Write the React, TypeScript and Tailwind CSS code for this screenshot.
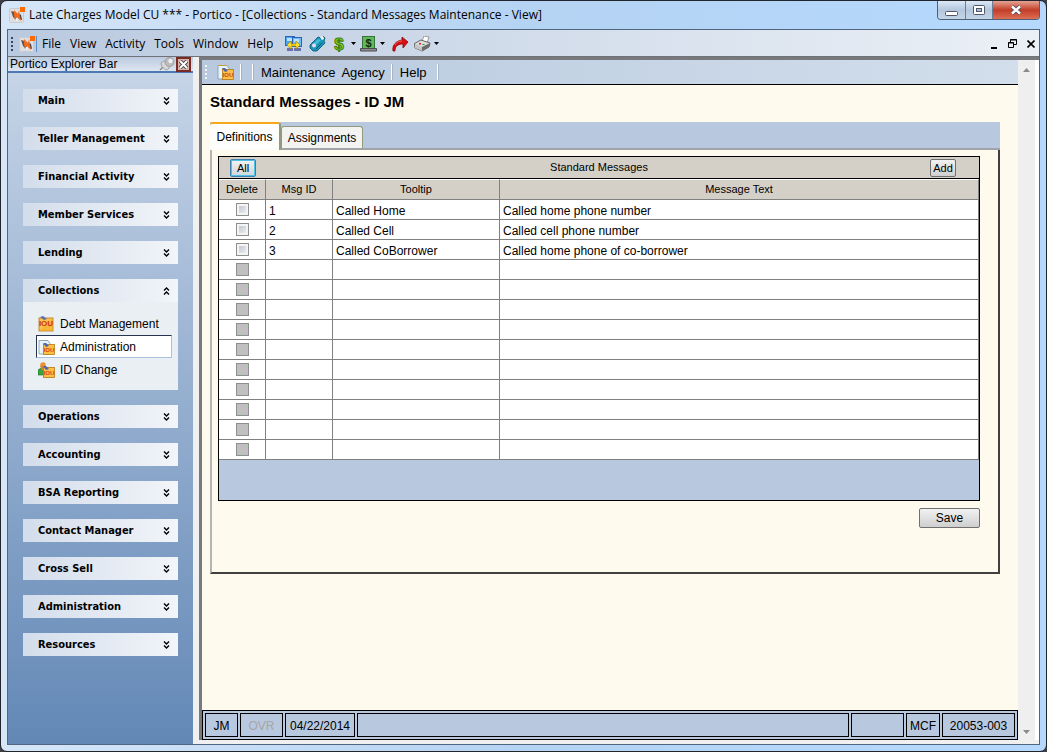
import React, { useState } from "react";
import clsx from "clsx";

type Row = { id: string; tooltip: string; text: string };

const sections = [
  "Main",
  "Teller Management",
  "Financial Activity",
  "Member Services",
  "Lending",
  "Collections",
  "Operations",
  "Accounting",
  "BSA Reporting",
  "Contact Manager",
  "Cross Sell",
  "Administration",
  "Resources",
];

const menus = ["File", "View", "Activity", "Tools", "Window", "Help"];

const rows: Row[] = [
  { id: "1", tooltip: "Called Home", text: "Called home phone number" },
  { id: "2", tooltip: "Called Cell", text: "Called cell phone number" },
  { id: "3", tooltip: "Called CoBorrower", text: "Called home phone of co-borrower" },
];

const emptyRows = Array.from({ length: 10 }, (_, i) => i);

const Logo: React.FC = () => (
  <svg width="16" height="16" viewBox="0 0 16 16" className="shrink-0">
    <rect x="0.5" y="1.5" width="14" height="14" rx="1" fill="#dedfe2" stroke="#c9cbd0" />
    <path d="M2 4l4 1 2 5-2 2-2-2z" fill="#5a5b60" />
    <path d="M9 6l3 2 1 5-3-1-2-3z" fill="#3f4146" />
    <path d="M5 3l4 4 1-4 1 6 1 5-4-4-2 3-1-5z" fill="#f26a1b" />
    <path d="M7 11l2 1-2 2z" fill="#f5f5f5" />
    <rect x="11" y="0" width="5" height="5" fill="#ff6a00" />
  </svg>
);

const NetworkIcon: React.FC = () => (
  <svg width="17" height="16" viewBox="0 0 17 16">
    <rect x="0.5" y="0.5" width="9" height="9" fill="#4aa4ee" stroke="#2d62b8" />
    <rect x="7.5" y="1.5" width="9" height="9" fill="#6cbcf8" stroke="#2d62b8" />
    <path d="M2 2h5v3H2zM9 3h5v3H9z" fill="#b5e2fc" />
    <path d="M2 12h6v3H2zM9 12h7v3H9z" fill="#6a70ae" />
    <path d="M2 9l4-4v3h5V5l4 4-4 4v-3H6v3z" fill="#ffe02a" stroke="#a98408" strokeWidth="0.7" />
  </svg>
);

const PhoneIcon: React.FC = () => (
  <svg width="17" height="16" viewBox="0 0 17 16">
    <path d="M1 9L9 1l3 1 2-2 2 2-1 3 1 2-8 8-4 0-3-3z" fill="#1697b8" stroke="#0b5270" strokeWidth="0.8" />
    <path d="M3 9l6-6 3 1-7 7z" fill="#45bcd8" />
    <path d="M11 1l3-1 1 3-2 1z" fill="#f2f6f8" />
    <circle cx="5" cy="9.5" r="2" fill="#f3d3f2" />
    <path d="M9 11l4-4M7 13l2-2" stroke="#0b5270" />
  </svg>
);

const DollarIcon: React.FC = () => (
  <svg width="12" height="16" viewBox="0 0 12 16">
    <text x="6" y="13.5" textAnchor="middle" fontSize="17" fontWeight="bold" fill="#86dc28" stroke="#3e7d0c" strokeWidth="1">
      $
    </text>
  </svg>
);

const CashIcon: React.FC = () => (
  <svg width="17" height="16" viewBox="0 0 17 16">
    <rect x="2.5" y="0.5" width="12" height="12" fill="#62b85c" stroke="#35733a" />
    <path d="M0.5 12.5h16v2.5h-16z" fill="#8d8d92" stroke="#4c4c50" />
    <text x="8.5" y="10.5" textAnchor="middle" fontSize="11" fontWeight="bold" fill="#0c2c10">
      $
    </text>
  </svg>
);

const ForwardIcon: React.FC = () => (
  <svg width="17" height="16" viewBox="0 0 17 16">
    <path d="M1 15C0 9 4 5 10 4V1l6 5-5 6V8C6 8 3 10 3 15z" fill="#d90e12" stroke="#8d0508" strokeWidth="0.8" />
    <path d="M3 9c1.500-3 4-4 7-4" fill="none" stroke="#f4605c" />
  </svg>
);

const PrinterIcon: React.FC = () => (
  <svg width="17" height="16" viewBox="0 0 17 16">
    <path d="M8 5l2-5 5 1-2 6z" fill="#fff" stroke="#888" strokeWidth="0.8" />
    <path d="M0.5 7.500L7 4l9 3-1 4-7 4-7-3z" fill="#dcdcdc" stroke="#444" strokeWidth="0.8" />
    <path d="M1 8l7 3v4l-7-3z" fill="#c4c4c4" />
    <path d="M8 11l8-4-1 4-7 4z" fill="#6b6b6b" />
    <path d="M5 7h2v1.500H5z" fill="#e02020" />
    <path d="M8.500 8h2v1h-2z" fill="#2c9a3c" />
  </svg>
);

const Caret: React.FC = () => (
  <svg width="5" height="3" viewBox="0 0 5 3" className="shrink-0">
    <path d="M0 0h5L2.500 3z" fill="#000" />
  </svg>
);

// small "IOU" note used by every Collections entry
const IouIcon: React.FC<{ kind?: "debt" | "admin" | "change" }> = ({ kind = "admin" }) => (
  <svg width="17" height="16" viewBox="0 0 17 16" className="shrink-0">
    {kind === "debt" && (
      <>
        <rect x="1" y="2" width="14" height="13" fill="#fbc44a" stroke="#b87816" strokeWidth="0.8" />
        <path d="M1 15L15 2v13z" fill="#f2a92c" opacity="0.5" />
        <path d="M2 1l3-1 4 3-3 1z" fill="#5a6fb4" />
        <text x="8" y="10" textAnchor="middle" fontSize="8" fontWeight="bold" fill="#d2321a">
          IOU
        </text>
      </>
    )}
    {kind === "admin" && (
      <>
        <path d="M1 1.500h9l2 3V15H1z" fill="#e6f3fa" stroke="#7f98a8" strokeWidth="0.8" />
        <path d="M1 1.500h9" stroke="#b89a40" strokeWidth="1.2" strokeDasharray="1 1" />
      </>
    )}
    {kind === "change" && (
      <>
        <circle cx="5" cy="3" r="2.8" fill="#e89232" />
        <path d="M0 13V8l3-2h5v7z" fill="#3da23e" stroke="#1d6a22" strokeWidth="0.6" />
        <path d="M2 4h6v4H4z" fill="#d98232" />
      </>
    )}
    {kind !== "debt" && (
      <>
        <rect x="5.5" y="5.5" width="11" height="10" fill="#fbc044" stroke="#b87816" strokeWidth="0.8" />
        <path d="M5 4l3 0 3 3-3 1z" fill="#4f66b0" />
        <text x="11" y="13" textAnchor="middle" fontSize="6" fontWeight="bold" fill="#d2441a">
          IOU
        </text>
      </>
    )}
  </svg>
);

const PinIcon: React.FC = () => (
  <svg width="16" height="14" viewBox="0 0 16 14">
    <path d="M1 13l5-5" stroke="#8a8a8a" strokeWidth="1.5" />
    <path d="M2 6c2-3 5-2 8 2 1 2 0 4-2 5-4-1-6-4-6-7z" fill="#d6d6d6" stroke="#8a8a8a" strokeWidth="0.7" />
    <circle cx="10.5" cy="5" r="4.5" fill="#bdbdbd" stroke="#909090" strokeWidth="0.7" />
    <circle cx="11.5" cy="4" r="2.2" fill="#f0f0f0" />
  </svg>
);

const Chevrons: React.FC<{ up?: boolean }> = ({ up }) => (
  <svg width="7" height="8" viewBox="0 0 7 8" className={clsx(up && "rotate-180")}>
    <path d="M1 0.500l2.500 2.500L6 0.500M1 4.500L3.500 7 6 4.500" fill="none" stroke="#000" strokeWidth="1.4" />
  </svg>
);

const Grip: React.FC<{ light?: boolean }> = ({ light }) => (
  <span
    className={clsx(
      "h-[14px] w-[2px] shrink-0",
      light
        ? "bg-[repeating-linear-gradient(#f4f4f4_0_2px,transparent_2px_4px)]"
        : "bg-[repeating-linear-gradient(#31466f_0_2px,transparent_2px_4px)]"
    )}
  />
);

const TitleBar: React.FC = () => (
  <header className="flex h-7 items-start justify-between pl-2 pr-[6px]">
    <div className="flex items-center gap-1 pt-[5px]">
      <Logo />
      <h1 className="whitespace-nowrap font-['Open_Sans',sans-serif] text-[12px] leading-[18px]">
        Late Charges Model CU *** - Portico - [Collections - Standard Messages Maintenance - View]
      </h1>
    </div>
    <div className="flex h-[19px] overflow-hidden rounded-b-[4px] border border-t-0 border-[#4d6078]">
      <button
        aria-label="Minimize"
        className="flex w-7 items-end justify-center border-r border-[#6a7f99] bg-linear-to-b from-[#dce8f5] via-[#b4c7dd] via-50% to-[#c3d5e8] pb-[3px]"
      >
        <svg width="13" height="6" viewBox="0 0 13 6">
          <rect x="0.5" y="1.5" width="12" height="4" rx="1" fill="#fff" stroke="#535666" />
        </svg>
      </button>
      <button
        aria-label="Restore"
        className="flex w-[27px] items-center justify-center border-r border-[#6a7f99] bg-linear-to-b from-[#dce8f5] via-[#b4c7dd] via-50% to-[#c3d5e8]"
      >
        <svg width="12" height="10" viewBox="0 0 12 10">
          <rect x="0.5" y="0.5" width="11" height="9" rx="1" fill="#fff" stroke="#535666" />
          <rect x="3.5" y="3.5" width="5" height="3" fill="#a9c0da" stroke="#535666" />
        </svg>
      </button>
      <button
        aria-label="Close"
        className="flex w-[46px] items-center justify-center bg-linear-to-b from-[#e3a294] via-[#c23c26] via-50% to-[#dc6f54]"
      >
        <svg width="12" height="10" viewBox="0 0 12 10">
          <path d="M2 1.500l8 7M10 1.500l-8 7" stroke="#535666" strokeWidth="4" />
          <path d="M2 1.500l8 7M10 1.500l-8 7" stroke="#fff" strokeWidth="2.4" />
        </svg>
      </button>
    </div>
  </header>
);

const MenuBar: React.FC = () => (
  <nav className="flex h-[26px] shrink-0 items-center justify-between bg-linear-to-r from-[#b9c9df] to-[#ebf0f6] pl-[3px] pr-1 pt-px">
    <div className="flex items-center">
      <Grip />
      <span className="ml-[6px] flex border-r border-[#5b8fd0] pr-px">
        <Logo />
      </span>
      <div className="ml-[5px] flex gap-[9px] font-['Open_Sans',sans-serif] text-[12px]">
        {menus.map((menu) => (
          <button key={menu}>{menu}</button>
        ))}
      </div>
      <div className="ml-3 flex items-center gap-[7px]">
        <button aria-label="Network"><NetworkIcon /></button>
        <button aria-label="Phone"><PhoneIcon /></button>
        <button aria-label="Money" className="flex items-center gap-[6px]">
          <DollarIcon />
          <Caret />
        </button>
        <button aria-label="Cash" className="-ml-[3px] flex items-center gap-[3px]">
          <CashIcon />
          <Caret />
        </button>
        <button aria-label="Forward"><ForwardIcon /></button>
        <button aria-label="Print" className="-ml-[2px] flex items-center gap-[3px]">
          <PrinterIcon />
          <Caret />
        </button>
      </div>
    </div>
    <div className="flex items-center gap-[10px]">
      <button aria-label="Minimize document">
        <svg width="7" height="10" viewBox="0 0 7 10"><path d="M0 8h6v2H0z" /></svg>
      </button>
      <button aria-label="Restore document">
        <svg width="9" height="9" viewBox="0 0 9 9">
          <path d="M2.500 3V0.500h6v5H6M2 1h7" fill="none" stroke="#000" />
          <path d="M0.500 3.500h5v5h-5zM0 4h6" fill="none" stroke="#000" />
        </svg>
      </button>
      <button aria-label="Close document">
        <svg width="8" height="8" viewBox="0 0 8 8"><path d="M0.500 0.500l7 7M7.500 0.500l-7 7" stroke="#000" strokeWidth="1.6" /></svg>
      </button>
    </div>
  </nav>
);

const Sidebar: React.FC = () => {
  const [open, setOpen] = useState("Collections");

  return (
    <aside className="flex w-[185px] shrink-0 flex-col bg-linear-to-b from-[#c8d6e8] to-[#6388b6]">
      <div className="flex h-4 items-center justify-between border-b-2 border-[#4d79b4] bg-linear-to-b from-[#bccbe0] to-[#dde5f0] pl-[2px] pr-[2px]">
        <h2 className="text-[12px] leading-[14px]">Portico Explorer Bar</h2>
        <div className="flex items-center gap-px">
          <button aria-label="Pin"><PinIcon /></button>
          <button
            aria-label="Close explorer bar"
            className="flex h-[15px] w-[15px] items-center justify-center border-2 border-[#7a2a24] bg-[#d8b4ae]"
          >
            <svg width="9" height="9" viewBox="0 0 9 9" className="shrink-0">
              <path d="M1 1l7 7M8 1L1 8" stroke="#444" strokeWidth="3.8" />
              <path d="M1 1l7 7M8 1L1 8" stroke="#fff" strokeWidth="2" />
            </svg>
          </button>
        </div>
      </div>
      <div className="flex flex-col gap-[15px] px-[15px] pt-4">
        {sections.map((name) => (
          <section key={name}>
            <button
              onClick={() => setOpen(open === name ? "" : name)}
              className="flex h-[23px] w-full items-center justify-between bg-linear-to-r from-[#d3ddeb] to-[#f2f5f9] pl-[15px] pr-2 font-['DejaVu_Sans_Condensed','DejaVu_Sans',sans-serif] text-[11px] font-bold"
            >
              <span className="pt-[2px]">{name}</span>
              <Chevrons up={open === name} />
            </button>
            {open === name && name === "Collections" && (
              <div className="bg-[#eaeff4] pb-[9px] pl-[13px] pr-[6px] pt-[10px] text-[12px]">
                <a href="#debt" className="flex h-[23px] items-center gap-[5px] px-[2px]">
                  <IouIcon kind="debt" />
                  Debt Management
                </a>
                <a
                  href="#administration"
                  className="flex h-[23px] items-center gap-[5px] border border-[#a9c0de] border-l-[#26344e] border-t-[#26344e] bg-white px-px"
                >
                  <IouIcon kind="admin" />
                  Administration
                </a>
                <a href="#id-change" className="flex h-[23px] items-center gap-[5px] px-[2px]">
                  <IouIcon kind="change" />
                  ID Change
                </a>
              </div>
            )}
          </section>
        ))}
      </div>
    </aside>
  );
};

const MessagesTable: React.FC = () => {
  const [checked, setChecked] = useState<string[]>([]);

  const toggle = (id: string) =>
    setChecked(checked.includes(id) ? checked.filter((c) => c !== id) : [...checked, id]);

  const box = "block mx-auto h-[13px] w-[13px] appearance-none border border-[#8e8f8f]";

  return (
    <div className="border border-black bg-[#b8c9df] pb-10">
      <div className="grid h-[22px] grid-cols-[1fr_auto_1fr] items-center border-b border-black bg-[#d4d0c8] px-[11px] text-[11px]">
        <button
          onClick={() => setChecked(rows.map((r) => r.id))}
          className="h-[18px] w-[26px] rounded-[2px] border border-[#3c7fb1] bg-linear-to-b from-[#f2f2f2] to-[#cfd6da] leading-4 ring-1 ring-inset ring-[#4cc3e6]"
        >
          All
        </button>
        <h3>Standard Messages</h3>
        <button className="mr-3 h-[18px] w-[26px] justify-self-end rounded-[2px] border border-[#707070] bg-linear-to-b from-[#f2f2f2] to-[#cfcfcf] leading-4">
          Add
        </button>
      </div>
      <table className="w-full table-fixed border-separate border-spacing-0 text-[12px]">
        <colgroup>
          <col className="w-[47px]" />
          <col className="w-[67px]" />
          <col className="w-[167px]" />
          <col />
        </colgroup>
        <thead>
          <tr className="h-[21px] bg-[#d4d0c8] text-[11px]">
            {["Delete", "Msg ID", "Tooltip", "Message Text"].map((head) => (
              <th key={head} className="border-b border-r border-t border-b-[#808080] border-r-[#808080] border-t-white p-0 font-normal">
                {head}
              </th>
            ))}
          </tr>
        </thead>
        <tbody>
          {rows.map((row) => (
            <tr key={row.id} className="h-5 bg-white leading-4">
              <td className="border-b border-r border-[#808080] p-0">
                <input
                  type="checkbox"
                  aria-label={"Delete message " + row.id}
                  checked={checked.includes(row.id)}
                  onChange={() => toggle(row.id)}
                  className={clsx(box, "bg-linear-to-br from-[#b9bfc8] to-[#f6f6f6] ring-2 ring-inset ring-[#f4f4f4] checked:from-[#2c5f9e]")}
                />
              </td>
              <td className="border-b border-r border-[#808080] p-0 pl-[3px] pt-[3px]">{row.id}</td>
              <td className="border-b border-r border-[#808080] p-0 pl-[3px] pt-[3px]">{row.tooltip}</td>
              <td className="border-b border-r border-[#808080] p-0 pl-[3px] pt-[3px]">{row.text}</td>
            </tr>
          ))}
          {emptyRows.map((i) => (
            <tr key={i} className="h-5 bg-white">
              <td className="border-b border-r border-[#808080] p-0">
                <input
                  type="checkbox"
                  disabled
                  aria-label={"Empty row " + (i + 1)}
                  className={clsx(box, "bg-[#bcbcbc] bg-[repeating-linear-gradient(45deg,#b4c6b4_0_1px,#c9bac9_1px_2px)]")}
                />
              </td>
              <td className="border-b border-r border-[#808080] p-0" />
              <td className="border-b border-r border-[#808080] p-0" />
              <td className="border-b border-r border-[#808080] p-0" />
            </tr>
          ))}
        </tbody>
      </table>
    </div>
  );
};

const StatusBar: React.FC = () => (
  <footer className="flex h-[30px] shrink-0 gap-[2px] border border-black bg-[#b8c9df] p-[2px] text-[12px] leading-[25px]">
    <span className="w-[33px] border border-black text-center">JM</span>
    <span className="w-[43px] border border-black text-center text-[#a6a6a6]">OVR</span>
    <span className="w-[70px] border border-black text-center">04/22/2014</span>
    <span className="flex-1 border border-black" />
    <span className="w-[53px] border border-black" />
    <span className="w-[34px] border border-black text-center">MCF</span>
    <span className="w-[73px] border border-black text-center">20053-003</span>
  </footer>
);

const Document: React.FC = () => {
  const [tab, setTab] = useState("Definitions");

  return (
    <main className="flex min-w-0 flex-1 flex-col bg-[#fffaee]">
      <div className="flex h-[25px] shrink-0 items-center border-b border-black bg-linear-to-r from-[#b8c9df] to-[#d2deeb] pl-[3px] text-[13px]">
        <Grip light />
        <button aria-label="Collections" className="ml-[10px]"><IouIcon /></button>
        <span className="ml-[6px] h-4 w-[2px] border-l border-white bg-[#a9b4c4]" />
        <span className="ml-[10px] h-4 w-[2px] border-l border-white bg-[#a9b4c4]" />
        <button className="ml-[7px] pt-[2px]">Maintenance</button>
        <button className="ml-[6px] pt-[2px]">Agency</button>
        <span className="ml-[6px] h-4 w-[2px] border-l border-white bg-[#a9b4c4]" />
        <button className="ml-[7px] pt-[2px]">Help</button>
        <span className="ml-[10px] h-4 w-[2px] border-l border-white bg-[#a9b4c4]" />
      </div>
      <div className="flex-1 pb-10 pl-2 pr-[18px] pt-[7px]">
        <h2 className="text-[15px] font-bold leading-5">Standard Messages - ID JM</h2>
        <div role="tablist" className="mt-[10px] flex h-7 items-end border-b-2 border-[#a0a4a6] bg-[#b8c9df] text-[12px]">
          <button
            role="tab"
            aria-selected={tab === "Definitions"}
            onClick={() => setTab("Definitions")}
            className="-mb-[2px] h-7 w-[71px] rounded-t-[3px] border-r-2 border-t-2 border-r-[#919b7c] border-t-[#f5a81c] bg-[#fdfdfb]"
          >
            Definitions
          </button>
          <button
            role="tab"
            aria-selected={tab === "Assignments"}
            onClick={() => setTab("Assignments")}
            className="h-[22px] w-[82px] rounded-t-[3px] border border-b-0 border-[#919b7c] bg-[#f3f3f1] pt-px"
          >
            Assignments
          </button>
        </div>
        <div className="border-x-2 border-b-2 border-b-[#404040] border-l-[#b4b4b4] border-r-[#404040] pb-11 pl-[6px] pr-[18px] pt-[6px]">
          <MessagesTable />
          <div className="mt-[7px] flex justify-end">
            <button className="h-5 w-[61px] rounded-[2px] border border-[#707070] bg-linear-to-b from-[#f2f2f2] to-[#cfcfcf] text-[12px]">
              Save
            </button>
          </div>
        </div>
      </div>
      <StatusBar />
    </main>
  );
};

const App: React.FC = () => {
  return (
    <div className="bg-[#3c3f44]">
      <div className="flex min-h-screen flex-col rounded-[7px] border border-[#22262c] bg-linear-to-r from-[#d6e6f8] via-[#b5d3f3] to-[#b4d9fd] font-['Liberation_Sans',Arial,sans-serif] text-black">
        <TitleBar />
        <div className="mx-[6px] mb-[6px] flex flex-1 flex-col border border-[#4f6680] bg-[#f0f0f0]">
          <MenuBar />
          <div className="flex flex-1 border-t border-[#6f7276]">
            <Sidebar />
            <div className="mb-1 ml-[6px] flex min-w-0 flex-1 border-l-3 border-t-3 border-[#77797c] bg-white pr-1">
              <Document />
              <div className="flex w-[17px] flex-col items-center justify-between bg-[#efefef] pb-[6px] pt-2">
                <button aria-label="Scroll up">
                  <svg width="7" height="4" viewBox="0 0 7 4" className="block"><path d="M0 4h7L3.500 0z" fill="#8a8a8a" /></svg>
                </button>
                <button aria-label="Scroll down">
                  <svg width="7" height="4" viewBox="0 0 7 4" className="block"><path d="M0 0h7L3.500 4z" fill="#8a8a8a" /></svg>
                </button>
              </div>
            </div>
          </div>
        </div>
      </div>
    </div>
  );
};

export default App;
